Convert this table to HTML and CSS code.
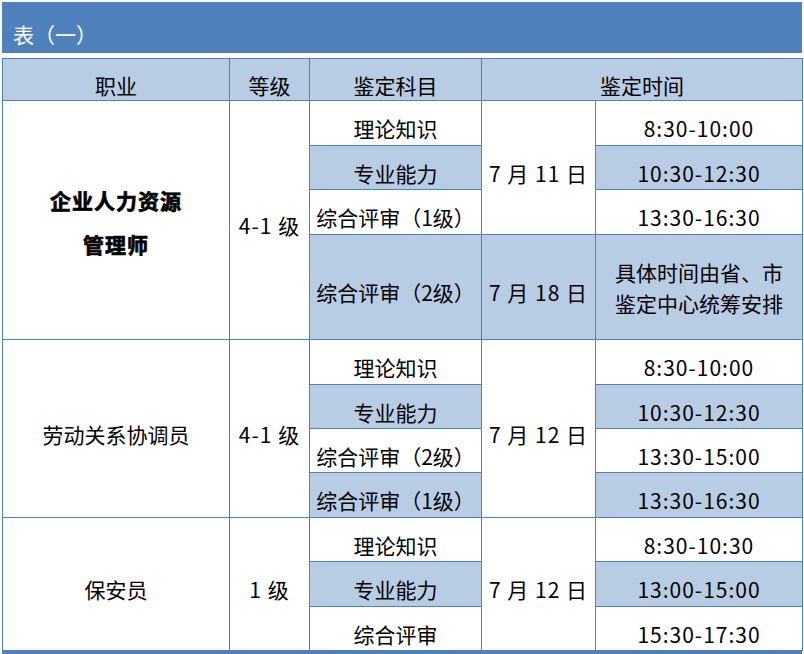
FILE: index.html
```html
<!DOCTYPE html>
<html lang="zh-CN">
<head>
<meta charset="utf-8">
<title>表（一）</title>
<link rel="stylesheet" href="styles.css">
</head>
<body>
<div class="sheet">
  <div class="title">表（一）</div>
  <table class="grid">
    <colgroup>
      <col class="c-job">
      <col class="c-level">
      <col class="c-subject">
      <col class="c-date">
      <col class="c-time">
    </colgroup>
    <thead>
      <tr class="head">
        <th>职业</th>
        <th>等级</th>
        <th>鉴定科目</th>
        <th colspan="2">鉴定时间</th>
      </tr>
    </thead>
    <tbody>
      <tr class="r45">
        <td rowspan="4" class="job bold"><div>企业人力资源</div><div>管理师</div></td>
        <td rowspan="4" class="num">4-1 级</td>
        <td>理论知识</td>
        <td rowspan="3" class="num">7 月 11 日</td>
        <td class="num">8:30-10:00</td>
      </tr>
      <tr class="r44">
        <td class="shade">专业能力</td>
        <td class="shade num">10:30-12:30</td>
      </tr>
      <tr class="r45">
        <td>综合评审（1级）</td>
        <td class="num">13:30-16:30</td>
      </tr>
      <tr class="r105">
        <td class="shade">综合评审（2级）</td>
        <td class="shade num">7 月 18 日</td>
        <td class="shade note">具体时间由省、市<br>鉴定中心统筹安排</td>
      </tr>

      <tr class="r45">
        <td rowspan="4">劳动关系协调员</td>
        <td rowspan="4" class="num">4-1 级</td>
        <td>理论知识</td>
        <td rowspan="4" class="num">7 月 12 日</td>
        <td class="num">8:30-10:00</td>
      </tr>
      <tr class="r44">
        <td class="shade">专业能力</td>
        <td class="shade num">10:30-12:30</td>
      </tr>
      <tr class="r44">
        <td>综合评审（2级）</td>
        <td class="num">13:30-15:00</td>
      </tr>
      <tr class="r45">
        <td class="shade">综合评审（1级）</td>
        <td class="shade num">13:30-16:30</td>
      </tr>

      <tr class="r44">
        <td rowspan="3">保安员</td>
        <td rowspan="3" class="num">1 级</td>
        <td>理论知识</td>
        <td rowspan="3" class="num">7 月 12 日</td>
        <td class="num">8:30-10:30</td>
      </tr>
      <tr class="r45">
        <td class="shade">专业能力</td>
        <td class="shade num">13:00-15:00</td>
      </tr>
      <tr class="r44">
        <td>综合评审</td>
        <td class="num">15:30-17:30</td>
      </tr>
    </tbody>
  </table>
  <div class="foot"></div>
</div>
</body>
</html>
```

FILE: styles.css
```css
html, body {
  margin: 0;
  padding: 0;
  background: #ffffff;
}

body {
  font-family: "Noto Sans CJK SC", "Noto Sans", sans-serif;
  color: #000000;
}

.sheet {
  width: 800px;
  margin: 2px 0 0 2px;
}

.title {
  height: 51px;
  box-sizing: border-box;
  background: #4f81bd;
  color: #ffffff;
  font-size: 21px;
  line-height: 24px;
  padding: 20px 0 0 11px;
}

.grid {
  margin-top: 5px;
  width: 800px;
  table-layout: fixed;
  border-collapse: collapse;
  font-size: 21px;
}

.c-job { width: 227px; }
.c-level { width: 80px; }
.c-subject { width: 172px; }
.c-date { width: 114px; }
.c-time { width: 207px; }

.grid th,
.grid td {
  border: 1px solid #4f81bd;
  padding: 10px 0 0 0;
  text-align: center;
  vertical-align: middle;
  line-height: 24px;
  font-weight: normal;
  white-space: nowrap;
}

.head th {
  background: #b8cce4;
  height: 31px;
}

.r44 td { height: 33px; }
.r45 td { height: 34px; }
.r105 td { height: 94px; }

.shade {
  background: #b8cce4;
}

.grid .num {
  letter-spacing: 1px;
}

.grid .bold {
  font-weight: 700;
  letter-spacing: 1px;
  -webkit-text-stroke: 0.7px #000000;
}

.job div {
  line-height: 44px;
}

.grid td.job {
  padding-top: 4px;
}

.grid td.note {
  line-height: 31px;
  padding-top: 2px;
}

.foot {
  height: 4px;
  background: #4f81bd;
}
```
